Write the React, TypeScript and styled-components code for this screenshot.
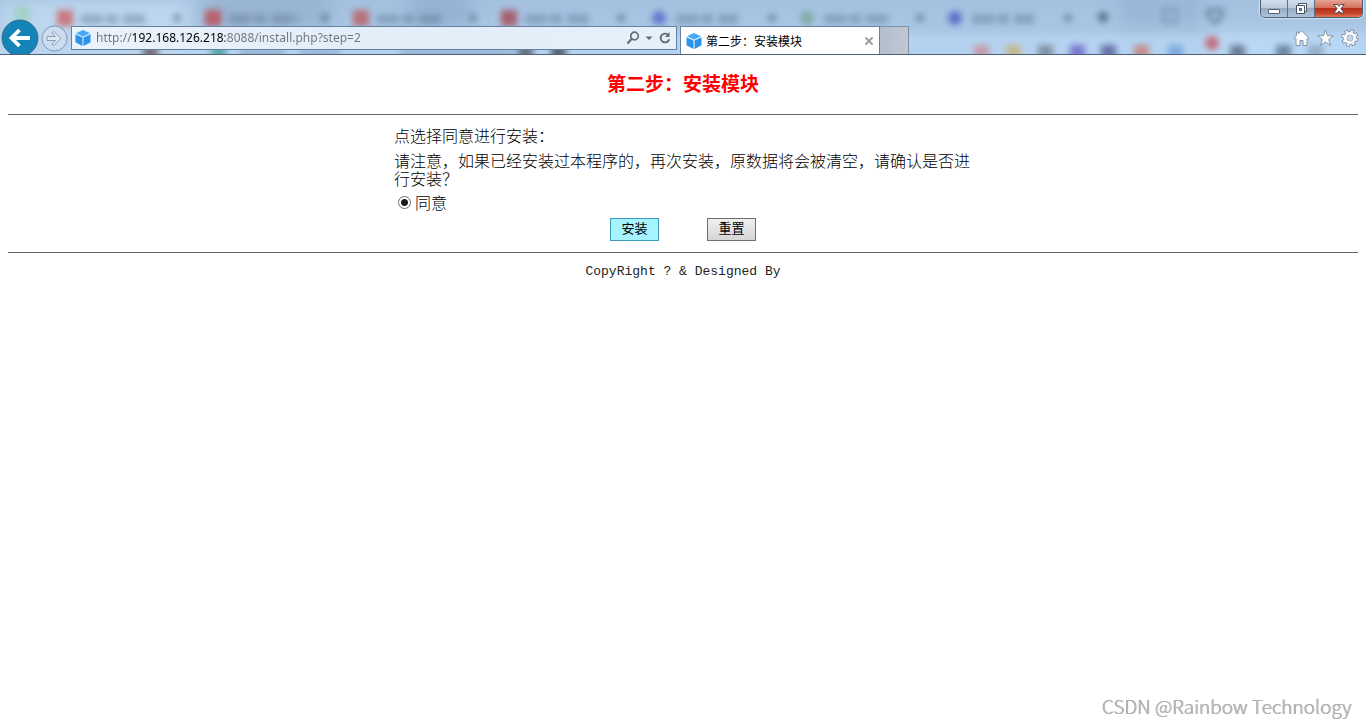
import React from "react";
import styled, { createGlobalStyle } from "styled-components";

const songti = `"Liberation Mono", "Noto Sans CJK SC", monospace`;
const uiFont = `"Noto Sans", "Noto Sans CJK SC", sans-serif`;

const GlobalStyle = createGlobalStyle`
  * { box-sizing: border-box; }
  html, body { margin: 0; background: #fff; }
  body { font-family: "Noto Sans CJK SC", sans-serif; color: #000; }
  button { font: inherit; cursor: pointer; }
`;

const Screen = styled.div`
  min-height: 100vh;
  display: flex;
  flex-direction: column;
`;

const Chrome = styled.header`
  position: relative;
  display: flex;
  height: 55px;
  padding-top: 26px;
  overflow: hidden;
  border-bottom: 1px solid #4b5f78;
  background: linear-gradient(180deg, #a3c0df 0, #a9c6e4 30px, #b4d1ef 38px, #b5d3f1 54px);
`;

const Glass = styled.svg`
  position: absolute;
  inset: 0;
  width: 100%;
  height: 54px;
`;

const Navigation = styled.nav`
  position: relative;
  display: flex;
  flex: 0 0 calc(50% - 3px);
  padding: 0 3px 0 1px;
`;

const RoundButton = styled.button<{ $size: number }>`
  flex: none;
  display: flex;
  width: ${(p) => p.$size}px;
  height: ${(p) => p.$size}px;
  margin: ${(p) => (p.$size > 30 ? "-7px 2px 0 0" : "-1px 3px 0 0")};
  padding: 0;
  border: 0;
  background: none;
`;

const AddressBar = styled.form`
  flex: 1;
  display: flex;
  align-items: center;
  height: 24px;
  padding: 0 3px;
  border: 1px solid #62809f;
  background: linear-gradient(90deg, #eaf2fb, #e3eef9 60%, #e6f0fa);
`;

const UrlInput = styled.input`
  flex: 1;
  min-width: 0;
  height: 22px;
  margin-left: 5px;
  padding: 0;
  border: 0;
  outline: 0;
  font: 12px/22px ${uiFont};
  background: linear-gradient(90deg, #6f757c 36px, #000 36px, #000 129px, #6f757c 129px);
  background-clip: text;
  -webkit-background-clip: text;
  -webkit-text-fill-color: transparent;
`;

const IconButton = styled.button`
  display: flex;
  align-items: center;
  justify-content: center;
  flex: none;
  padding: 0;
  border: 0;
  background: none;
`;

const Tabs = styled.div`
  position: relative;
  display: flex;
  flex: 1;
`;

const Tab = styled.div`
  display: flex;
  align-items: center;
  width: 200px;
  padding: 0 5px;
  gap: 4px;
  border: 1px solid #62809f;
  border-bottom: 0;
  background: #fff;
  font: 12px/28px "Noto Sans CJK SC", sans-serif;
`;

const TabTitle = styled.span`
  flex: 1;
`;

const NewTab = styled.button`
  width: 29px;
  padding: 0;
  border: 1px solid #7d92aa;
  border-width: 1px 1px 0 0;
  background: linear-gradient(100deg, #b3bfcc, #c1c8d3);
`;

const Tools = styled.div`
  display: flex;
  gap: 6px;
  margin-left: auto;
  padding: 3px 7px 0 0;
  align-items: flex-start;
`;

const WindowControls = styled.div`
  position: absolute;
  top: 0;
  right: 3px;
  display: flex;
  height: 18px;
  border: 1px solid #4c5e73;
  border-top: 0;
  border-radius: 0 0 5px 5px;
  overflow: hidden;
  box-shadow: 0 0 1px 1px #d3e3f4;
`;

const WindowButton = styled.button<{ $close?: boolean }>`
  display: flex;
  align-items: center;
  justify-content: center;
  width: ${(p) => (p.$close ? 47 : 27)}px;
  padding: 0;
  border: 0;
  border-right: ${(p) => (p.$close ? "0" : "1px solid #5d7189")};
  background: ${(p) =>
    p.$close
      ? "linear-gradient(180deg, #e5a394, #d4705b 45%, #b52f1a 50%, #c9452b 80%, #e07a52)"
      : "linear-gradient(180deg, #d2deeb, #bccbdc 45%, #98abc2 50%, #aec3dc)"};
`;

const Page = styled.main`
  padding: 0 8px;
`;

const Title = styled.h1`
  margin: 0;
  padding: 15px 0 19px;
  text-align: center;
  color: #f00;
  font: bold 19px/25px "Noto Sans CJK SC", sans-serif;
`;

const Rule = styled.hr`
  height: 1px;
  margin: 0;
  border: 0;
  background: #666;
`;

const InstallForm = styled.form`
  max-width: 578px;
  margin: 0 auto;
  padding: 11px 0;
  font: 300 16px/18px "Noto Sans CJK SC", sans-serif;
`;

const Line = styled.p`
  margin: 0 0 7px;
`;

const Choice = styled.label`
  display: flex;
  align-items: center;
  gap: 4px;
  margin-top: -1px;
  padding-left: 4px;
`;

const Radio = styled.input`
  appearance: none;
  width: 13px;
  height: 13px;
  margin: 0;
  border: 1px solid #6b6b6b;
  border-radius: 50%;
  background: #fff;
  &:checked {
    background: radial-gradient(circle, #1b1b1b 3px, #fff 4px);
  }
`;

const Actions = styled.div`
  display: flex;
  justify-content: center;
  gap: 48px;
  margin-top: 7px;
`;

const FormButton = styled.button<{ $primary?: boolean }>`
  width: 49px;
  height: 23px;
  padding: 0 0 3px;
  border: 1px solid ${(p) => (p.$primary ? "#3c9cb8" : "#707070")};
  background: ${(p) => (p.$primary ? "#a6f4ff" : "linear-gradient(180deg, #efefef, #d6d6d6)")};
  font: 13px/18px "Noto Sans CJK SC", sans-serif;
  color: #000;
`;

const Footer = styled.footer`
  padding-top: 10px;
  text-align: center;
  font: 13px/18px ${songti};
  color: #222;
`;

const Watermark = styled.div`
  position: fixed;
  right: 15px;
  bottom: 8px;
  font: 300 19px/24px "Noto Sans CJK SC", sans-serif;
  color: #b0b0b0;
  text-shadow: 1px 0 0 #b4b4b4;
`;

const Cube = () => (
  <svg width="16" height="18" viewBox="0 0 16 18" aria-hidden="true">
    <path d="M8 1 15 4.3 8 7.7 1 4.3Z" fill="#45aaf5" />
    <path d="M.5 5.3 7.5 8.6V17L.5 13.3Z" fill="#2a94ea" />
    <path d="M15.5 5.3 8.5 8.6V17l7-3.7Z" fill="#2a94ea" />
  </svg>
);

const oldTabs = [
  { x: 57, color: "#cc6a6c", w: 86 },
  { x: 205, color: "#bd5057", w: 90 },
  { x: 353, color: "#bd6268", w: 84 },
  { x: 501, color: "#a94c5a", w: 84 },
  { x: 652, color: "#5a69cb", w: 82 },
  { x: 800, color: "#7aa99a", w: 86 },
  { x: 948, color: "#5362c6", w: 82 },
];

const bookmarks: [number, string][] = [
  [150, "#6f5f66"], [218, "#48a498"], [525, "#56606c"], [558, "#46525f"],
  [981, "#c8929b"], [1013, "#c8b47d"], [1045, "#7b8795"], [1077, "#7068cb"],
  [1108, "#59609a"], [1141, "#c68379"], [1175, "#74a5db"], [1237, "#607286"],
  [1283, "#627991"], [1315, "#90a7be"],
];

const Backdrop = () => (
  <Glass aria-hidden="true">
    <defs>
      <filter id="soft" x="-20%" y="-50%" width="140%" height="200%" colorInterpolationFilters="sRGB">
        <feGaussianBlur stdDeviation="3" />
      </filter>
      <filter id="wide" x="-20%" y="-50%" width="140%" height="200%" colorInterpolationFilters="sRGB">
        <feGaussianBlur stdDeviation="8" />
      </filter>
    </defs>
    <g filter="url(#wide)">
      <rect x="0" y="0" width="190" height="60" fill="#bcd6ee" />
      <rect x="205" y="-6" width="125" height="34" fill="#98b4d0" />
      <rect x="410" y="-8" width="60" height="36" fill="#94b2d1" />
      <rect x="1120" y="-10" width="80" height="36" fill="#99b7d6" />
      <rect x="1210" y="34" width="156" height="26" fill="#b9d7f5" />
    </g>
    <g filter="url(#soft)" opacity=".85">
      <circle cx="22" cy="14" r="9" fill="#9dd0c3" />
      {oldTabs.map((t) => (
        <g key={t.x}>
          {t.x < 600 ? (
            <rect x={t.x} y="10" width="16" height="16" fill={t.color} />
          ) : (
            <circle cx={t.x + 7} cy="18" r="7" fill={t.color} />
          )}
          <path
            d={`M${t.x + 24} 19h${t.w - 20}`}
            stroke="#58708d"
            strokeWidth="9"
            strokeDasharray="22 3 12 5"
            opacity=".5"
          />
          <circle cx={t.x + 120} cy="18" r="4" fill="#4e6580" opacity=".7" />
        </g>
      ))}
      <path d="M1097 17h12M1103 11v12" stroke="#425971" strokeWidth="4" />
      <path d="M1164 10h12v12h-12z" fill="none" stroke="#6984a1" strokeWidth="2" />
      <path d="M1208 10h14v6l-7 7-7-7z" fill="none" stroke="#4f6b88" strokeWidth="3" />
      {bookmarks.map(([x, c]) => (
        <rect key={x} x={x - 7} y="45" width="15" height="14" fill={c} />
      ))}
      <circle cx="1212" cy="43" r="7" fill="#c65b68" />
      <path d="M240 53h45M300 53h40M400 53h115" stroke="#7090b0" strokeWidth="4" />
    </g>
  </Glass>
);

const BrowserChrome = () => (
  <Chrome>
    <Backdrop />
    <Navigation aria-label="Browser">
      <RoundButton $size={38} aria-label="Back">
        <svg width="38" height="38" viewBox="0 0 38 38">
          <circle cx="19" cy="19" r="18" fill="#1383b8" stroke="#3a7090" />
          <path d="M29 19H11M18.5 11 10.5 19l8 8" fill="none" stroke="#fff" strokeWidth="3.8" />
        </svg>
      </RoundButton>
      <RoundButton $size={27} aria-label="Forward">
        <svg width="27" height="27" viewBox="0 0 27 27">
          <circle cx="13.5" cy="13.5" r="12.5" fill="#cbddef" stroke="#8299b4" />
          <path
            d="M6 11.5h8.500L11 8l1.700-1.700 7.300 7.200-7.300 7.200L11 19l3.500-3.500H6Z"
            fill="#dce9f5"
            stroke="#8a9db2"
          />
        </svg>
      </RoundButton>
      <AddressBar onSubmit={(e) => e.preventDefault()}>
        <Cube />
        <UrlInput
          aria-label="Address"
          spellCheck={false}
          defaultValue="http://192.168.126.218:8088/install.php?step=2"
        />
        <IconButton type="submit" aria-label="Search">
          <svg width="16" height="16" viewBox="0 0 16 16" fill="none" stroke="#626b76">
            <circle cx="9.500" cy="6" r="3.800" strokeWidth="1.700" />
            <path d="M6.500 9 2.500 13.500" strokeWidth="2.200" />
          </svg>
        </IconButton>
        <IconButton type="button" aria-label="Address history">
          <svg width="16" height="16" viewBox="0 0 16 16">
            <path d="M4.500 6.500h7L8 10Z" fill="#626b76" />
          </svg>
        </IconButton>
        <IconButton type="button" aria-label="Refresh">
          <svg width="16" height="16" viewBox="0 0 16 16" fill="none" stroke="#626b76">
            <path d="M11.500 5.200A4.400 4.400 0 1 0 12.300 9.300" strokeWidth="1.900" />
            <path d="M12.500 2v5H8Z" fill="#626b76" stroke="none" />
          </svg>
        </IconButton>
      </AddressBar>
    </Navigation>
    <Tabs>
      <Tab>
        <Cube />
        <TabTitle>第二步：安装模块</TabTitle>
        <IconButton aria-label="Close tab">
          <svg width="10" height="10" viewBox="0 0 10 10" stroke="#9a9a9a" strokeWidth="1.800">
            <path d="m1.500 1.500 7 7M8.500 1.500l-7 7" />
          </svg>
        </IconButton>
      </Tab>
      <NewTab aria-label="New tab" />
      <Tools>
        <IconButton aria-label="Home">
          <svg width="18" height="18" viewBox="0 0 18 18" fill="#fff" stroke="#8394a6">
            <path d="M8.500 1.700 16 9.100l-1.200 1.200-.8-.8v7h-4v-5H7v5H3v-7l-.8.8L1 9.100l2.500-2.500V3h2v1.700Z" />
          </svg>
        </IconButton>
        <IconButton aria-label="Favorites">
          <svg width="18" height="18" viewBox="0 0 18 18" fill="#fff" stroke="#8394a6">
            <path d="m8.500 1 2 5.800h6l-4.800 3.700 1.800 6-5-3.600-5 3.600 1.800-6L.5 6.800h6Z" />
          </svg>
        </IconButton>
        <IconButton aria-label="Settings">
          <svg width="18" height="18" viewBox="0 0 18 18">
            <circle cx="9" cy="9" r="6.800" fill="none" stroke="#76899d" strokeWidth="3.800" strokeDasharray="3.300 2.040" />
            <circle cx="9" cy="9" r="4.800" fill="none" stroke="#76899d" strokeWidth="4" />
            <circle cx="9" cy="9" r="6.800" fill="none" stroke="#fff" strokeWidth="2.200" strokeDasharray="2.100 3.240" strokeDashoffset="-.6" />
            <circle cx="9" cy="9" r="4.700" fill="none" stroke="#fff" strokeWidth="2.800" />
            <circle cx="9" cy="9" r="2.500" fill="#c5d9ed" />
          </svg>
        </IconButton>
      </Tools>
    </Tabs>
    <WindowControls>
      <WindowButton aria-label="Minimize">
        <svg width="14" height="16" viewBox="0 0 14 16">
          <rect x="1.500" y="8.500" width="11" height="4" rx=".5" fill="#fff" stroke="#55606f" />
        </svg>
      </WindowButton>
      <WindowButton aria-label="Restore">
        <svg width="13" height="16" viewBox="0 0 13 16" stroke="#48515f">
          <path d="M3.500 2.500h8v8h-8Z" fill="#fff" />
          <path d="M1.500 4.500h8v8h-8Z" fill="#fff" />
          <path d="M4.500 7.500h2v2h-2Z" fill="#a5b5c8" />
        </svg>
      </WindowButton>
      <WindowButton $close aria-label="Close">
        <svg width="14" height="16" viewBox="0 0 14 16">
          <path
            d="M1.800 3.500h3.500L7 5.400l1.700-1.900h3.500L8.900 7.700l3.300 4.300H8.700L7 10l-1.700 2H1.800l3.300-4.300Z"
            fill="#fff"
            stroke="#5c4650"
          />
        </svg>
      </WindowButton>
    </WindowControls>
  </Chrome>
);

export default function App() {
  return (
    <Screen>
      <GlobalStyle />
      <BrowserChrome />
      <Page>
        <Title>第二步：安装模块</Title>
        <Rule />
        <InstallForm onSubmit={(e) => e.preventDefault()}>
          <Line>点选择同意进行安装：</Line>
          <Line>请注意，如果已经安装过本程序的，再次安装，原数据将会被清空，请确认是否进行安装？</Line>
          <Choice>
            <Radio type="radio" name="agree" defaultChecked />
            同意
          </Choice>
          <Actions>
            <FormButton $primary type="submit">安装</FormButton>
            <FormButton type="reset">重置</FormButton>
          </Actions>
        </InstallForm>
        <Rule />
        <Footer>CopyRight ? &amp; Designed By</Footer>
      </Page>
      <Watermark>CSDN @Rainbow Technology</Watermark>
    </Screen>
  );
}
